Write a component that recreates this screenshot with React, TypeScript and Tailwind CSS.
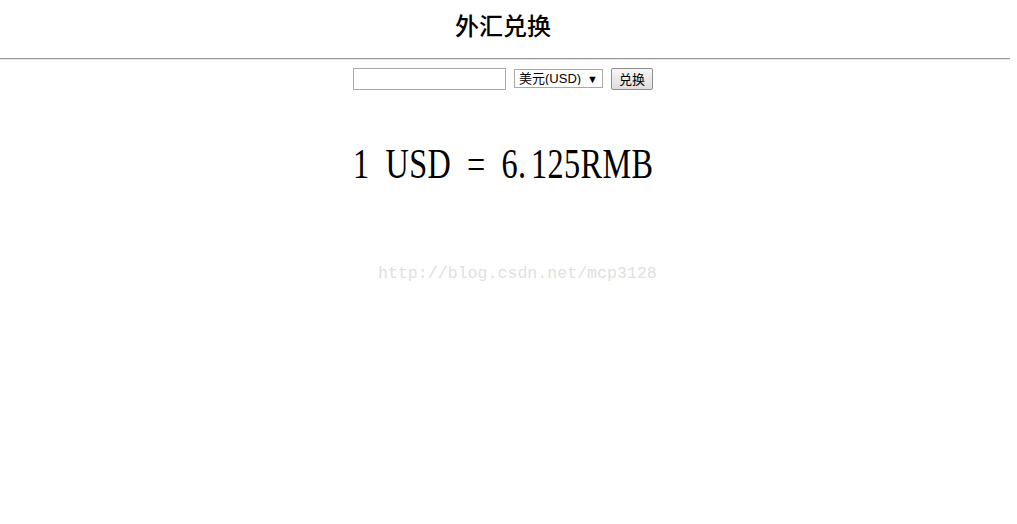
export default function App() {
  return (
    <div className="relative w-[1010px] min-h-[524px] bg-white text-black">
      {/* header */}
      <div className="w-[1006px] h-[50px] flex items-center justify-center">
        <h2 className="text-[24px] font-medium leading-none [font-family:'Noto_Sans_CJK_SC',serif]">
          外汇兑换
        </h2>
      </div>
      <div className="mt-[8px] w-[1010px] border-t border-t-[#999] border-b border-b-[#e6e6e6]" />

      {/* form */}
      <div className="w-[1006px] mt-[8px] flex items-center justify-center gap-[8px] text-[13px] [font-family:'Liberation_Sans','Noto_Sans_CJK_SC',sans-serif]">
        <input
          type="text"
          className="w-[153px] h-[22px] border border-[#a9a9a9] px-1 outline-none"
        />
        <div className="relative">
          <select className="appearance-none w-[89px] h-[19px] border border-[#a9a9a9] bg-white pl-[4px] text-[13px] leading-none outline-none">
            <option>美元(USD)</option>
          </select>
          <span className="absolute right-[5px] top-[2px] text-[11px] pointer-events-none">▼</span>
        </div>
        <button className="w-[42px] h-[22px] border border-[#8f8f8f] rounded-[2px] bg-gradient-to-b from-[#f6f6f6] to-[#dedede] text-[13px] leading-none">
          兑换
        </button>
      </div>

      {/* result */}
      <div className="w-[1006px] mt-[50px] flex justify-center">
        <p className="text-[43px] leading-[48px] scale-x-[0.75] whitespace-nowrap tracking-[0.5px] [word-spacing:10px] [font-family:'Liberation_Serif',serif]">
          1 USD = 6<span className="pr-[6px]">.</span>125RMB
        </p>
      </div>

      {/* watermark */}
      <span className="absolute left-[378px] top-[262px] text-[16.6px] text-[#e0e0e0] [font-family:'Liberation_Mono',monospace]">
        http://blog.csdn.net/mcp3128
      </span>
    </div>
  );
}
